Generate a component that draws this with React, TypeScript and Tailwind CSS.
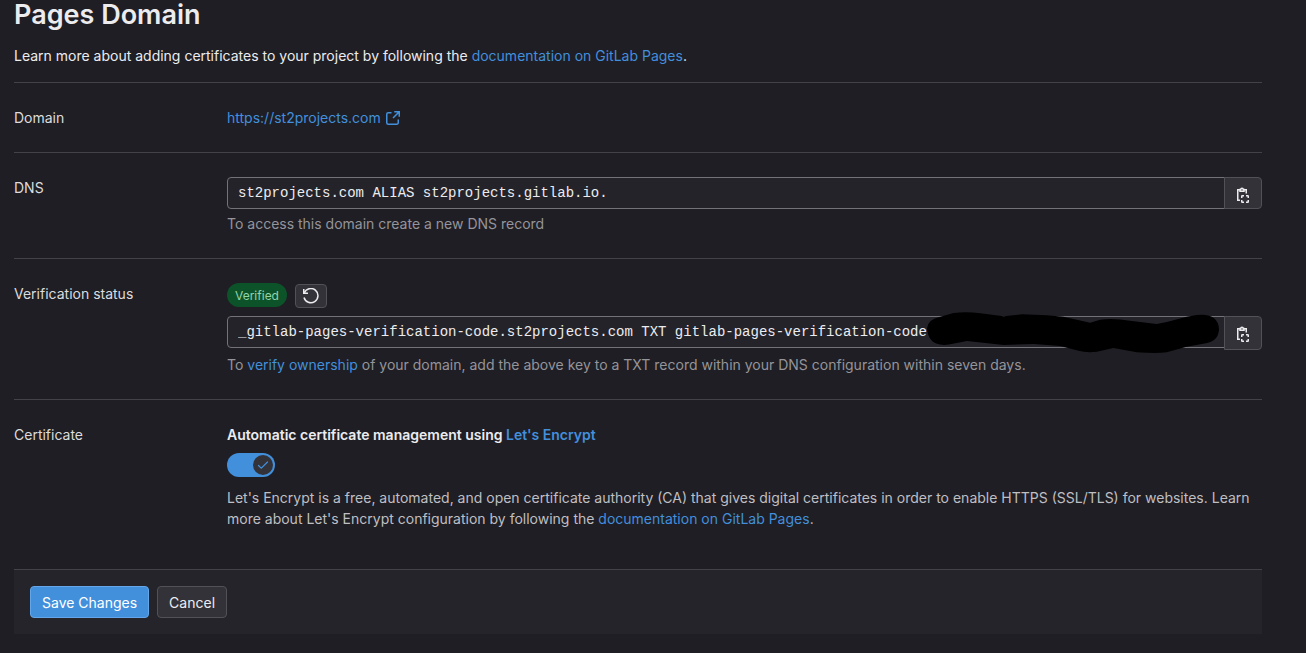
import { useState } from "react";
import type { ReactNode } from "react";

function Link({ children, href = "#" }: { children: ReactNode; href?: string }) {
  return (
    <a href={href} className="text-[#428fdc] hover:underline">
      {children}
    </a>
  );
}

function ExternalIcon() {
  return (
    <svg viewBox="0 0 16 16" className="size-4 shrink-0" fill="none" stroke="currentColor" strokeWidth="1.5" aria-hidden="true">
      <path d="M6.5 2.75H3.25a1.5 1.5 0 0 0-1.5 1.5v8.5a1.5 1.5 0 0 0 1.5 1.5h8.5a1.5 1.5 0 0 0 1.5-1.5V9.5" />
      <path d="M9.25 1.75h5v5M14 2 8 8" />
    </svg>
  );
}

function CopyIcon() {
  return (
    <svg viewBox="0 0 16 16" className="size-4" fill="none" stroke="currentColor" strokeWidth="1.5" aria-hidden="true">
      <path d="M5 13.25H2.75v-10.5H5M9 2.75h2.25V6.5" />
      <path d="M5 4.25V2.5h.75a1.25 1.25 0 0 1 2.5 0H9v1.75z" />
      <path d="M6.75 11V9.25a.5.5 0 0 1 .5-.5H9M11 8.75h1.75a.5.5 0 0 1 .5.5V11M13.25 13v1.75a.5.5 0 0 1-.5.5H11M9 15.25H7.25a.5.5 0 0 1-.5-.5V13" />
    </svg>
  );
}

function RetryIcon() {
  return (
    <svg viewBox="0 0 16 16" className="size-4" fill="none" stroke="currentColor" strokeWidth="1.5" aria-hidden="true">
      <path d="M.75 1v4.25H5" />
      <path d="M1.25 5A7.1 7.1 0 1 1 1 9.5" />
    </svg>
  );
}

function Row({ label, htmlFor, children }: { label: string; htmlFor?: string; children: ReactNode }) {
  return (
    <div className="flex border-t border-[#434248] py-6">
      {htmlFor ? (
        <label htmlFor={htmlFor} className="w-[213px] shrink-0">
          {label}
        </label>
      ) : (
        <div className="w-[213px] shrink-0">{label}</div>
      )}
      <div className="min-w-0 flex-1">{children}</div>
    </div>
  );
}

function CopyField({ id, value, tall = false }: { id: string; value: string; tall?: boolean }) {
  return (
    <div className="flex items-start">
      <input
        id={id}
        readOnly
        value={value}
        className="h-8 min-w-0 flex-1 rounded-l border border-[#737278] bg-[#24232a] px-2.5 font-['Liberation_Mono',monospace] text-[14px] leading-[30px] text-[#ececef] outline-none"
      />
      <button
        type="button"
        aria-label="Copy to clipboard"
        className={`-ml-px flex w-[38px] items-center justify-center rounded-r border border-[#535158] bg-[#333238] text-[#ececef] ${tall ? "h-[34px] pt-0.5" : "h-8 pt-1"}`}
      >
        <CopyIcon />
      </button>
    </div>
  );
}

export default function App() {
  const [automatic, setAutomatic] = useState(true);
  return (
    <main className="min-h-screen bg-[#1f1e24] pr-11 pl-3.5 font-[Inter,'Noto_Sans',sans-serif] text-[14px] leading-[21px] text-[#dcdcde]">
      <h1 className="text-[27px] leading-[30px] font-semibold text-[#ececef]">Pages Domain</h1>
      <p className="mt-[15px] mb-4 text-[#ececef]">
        Learn more about adding certificates to your project by following the <Link>documentation on GitLab Pages</Link>.
      </p>
      <form onSubmit={(e) => e.preventDefault()}>
        <Row label="Domain">
          <a href="https://st2projects.com" className="inline-flex items-center gap-1 align-top text-[#428fdc]">
            https://st2projects.com
            <ExternalIcon />
          </a>
        </Row>

        <Row label="DNS" htmlFor="dns">
          <CopyField id="dns" value="st2projects.com ALIAS st2projects.gitlab.io." />
          <p className="mt-1 text-[#95949a]">To access this domain create a new DNS record</p>
        </Row>

        <Row label="Verification status" htmlFor="verification">
          <div className="mb-2 flex items-start gap-2">
            <span className="flex h-6 items-center rounded-full bg-[#0d532a] px-2 text-[12px] text-[#91d4a8]">Verified</span>
            <button
              type="button"
              aria-label="Retry verification"
              className="mt-px flex h-6 w-8 items-center justify-center rounded border border-[#535158] bg-[#333238] text-[#ececef]"
            >
              <RetryIcon />
            </button>
          </div>
          <div className="relative">
            <CopyField
              id="verification"
              tall
              value="_gitlab-pages-verification-code.st2projects.com TXT gitlab-pages-verification-code"
            />
            <svg viewBox="80 33 880 129" className="absolute -top-[5px] right-[42px] h-[43px] w-[293px]" aria-hidden="true">
              <path
                fill="#000"
                d="M80 85Q82 58 120 50L160 39Q200 34 240 40L310 49 365 43 440 46 490 50 570 68 600 59Q640 54 690 62L770 72 800 66 860 50 890 45Q955 38 957 88Q955 124 918 130L860 140 800 157Q770 161 710 157L640 144 590 155Q560 159 535 152L480 138 400 132 310 135 200 123 150 133Q84 144 80 85Z"
              />
            </svg>
          </div>
          <p className="mt-1 text-[#95949a]">
            To <Link>verify ownership</Link> of your domain, add the above key to a TXT record within your DNS configuration within seven days.
          </p>
        </Row>

        <Row label="Certificate">
          <h2 className="font-semibold text-[#ececef]">
            Automatic certificate management using <Link>Let's Encrypt</Link>
          </h2>
          <button
            type="button"
            role="switch"
            aria-checked={automatic}
            aria-label="Automatic certificate management"
            onClick={() => setAutomatic(!automatic)}
            className={`mt-2 flex h-6 w-12 items-center rounded-full p-0.5 ${automatic ? "justify-end bg-[#428fdc]" : "justify-start bg-[#737278]"}`}
          >
            <span className="flex size-5 items-center justify-center rounded-full bg-[#333238] text-[#428fdc]">
              <svg viewBox="0 0 12 12" className="size-3" fill="none" stroke="currentColor" strokeWidth="1.2" strokeLinecap="round" aria-hidden="true">
                <path d="m1.5 6.5 2.75 2.75L10.5 3" />
              </svg>
            </span>
          </button>
          <p className="mt-[10px] mb-4 text-[#bfbfc3]">
            Let's Encrypt is a free, automated, and open certificate authority (CA) that gives digital certificates in order to enable HTTPS (SSL/TLS) for
            websites. Learn more about Let's Encrypt configuration by following the <Link>documentation on GitLab Pages</Link>.
          </p>
        </Row>

        <div className="flex gap-2 border-t border-[#434248] bg-[#25242a] p-4">
          <button type="submit" className="h-8 rounded border border-[#63a6e9] bg-[#428fdc] px-[11px] text-white">
            Save Changes
          </button>
          <button type="button" className="h-8 rounded border border-[#535158] bg-[#333238] px-[11px] text-[#ececef]">
            Cancel
          </button>
        </div>
      </form>
    </main>
  );
}
